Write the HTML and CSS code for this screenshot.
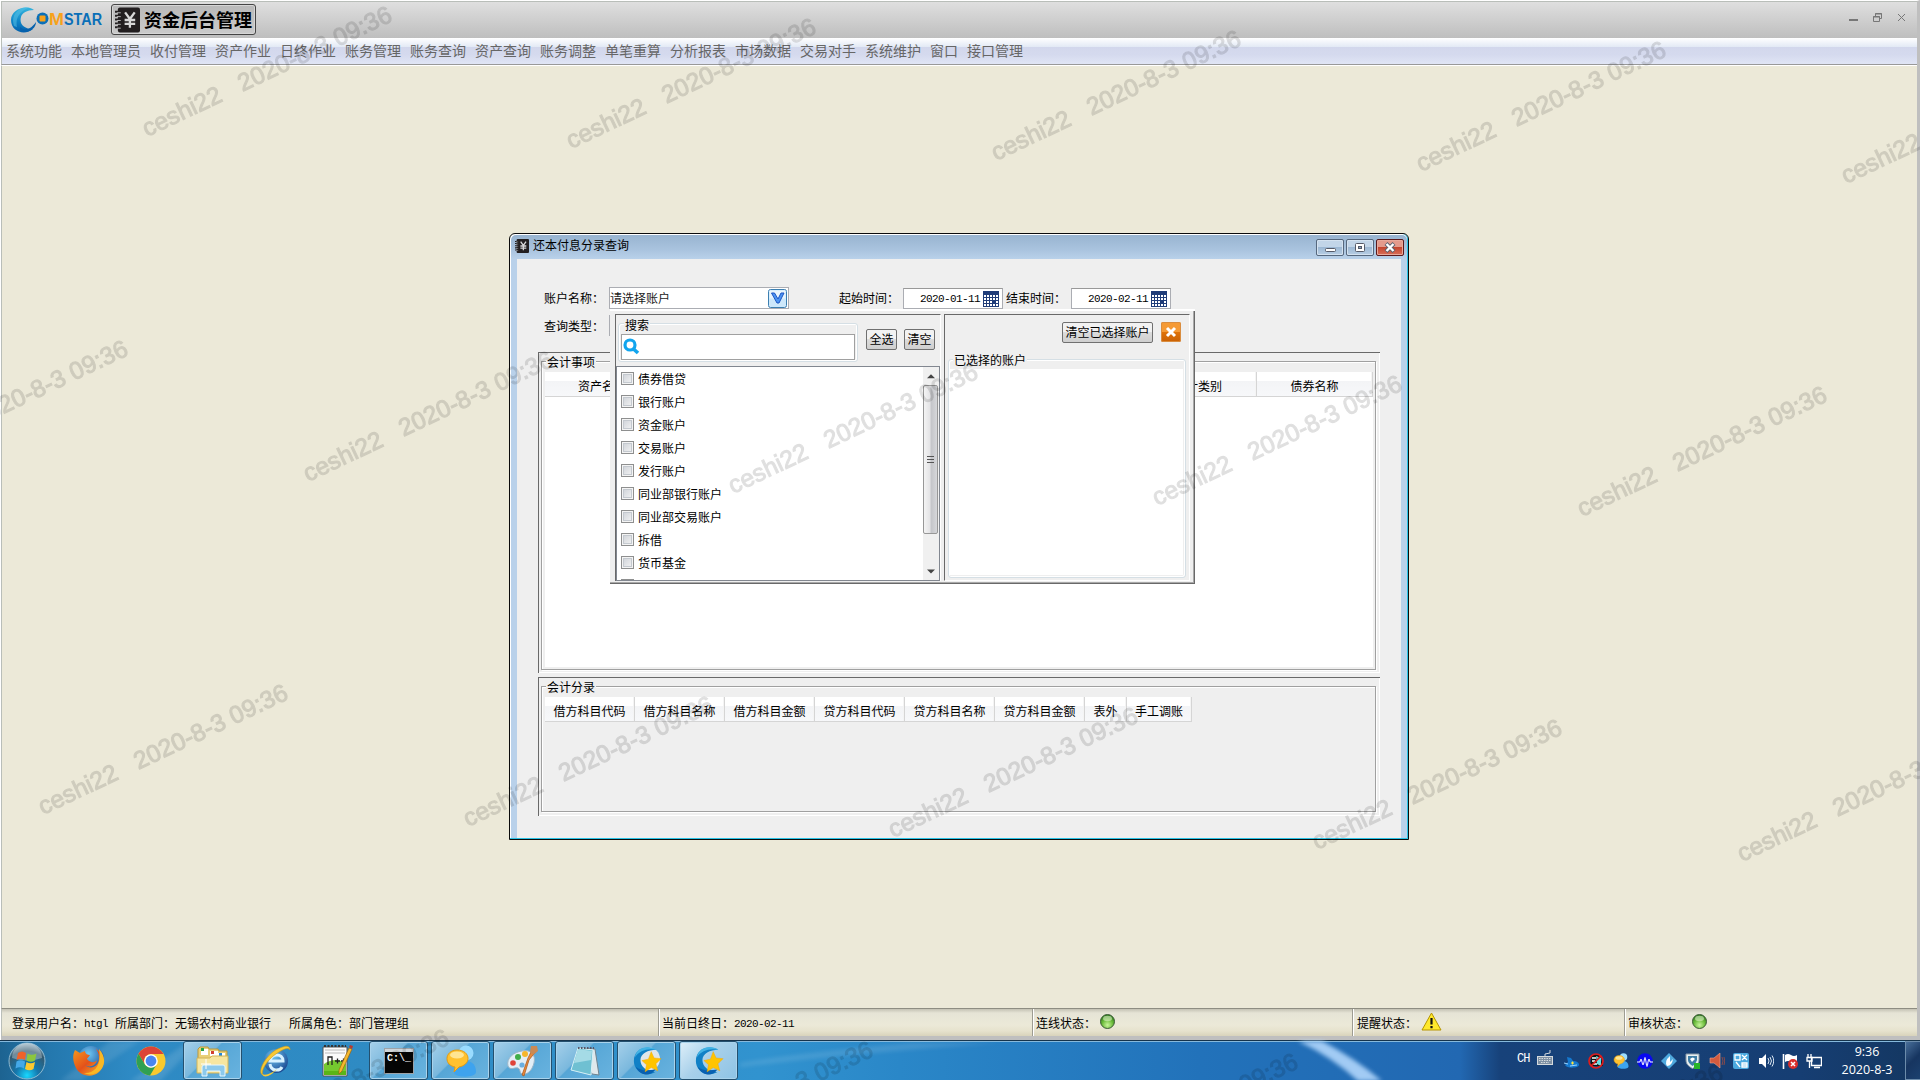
FILE: index.html
```html
<!DOCTYPE html>
<html lang="zh-CN">
<head>
<meta charset="utf-8">
<title>资金后台管理</title>
<link rel="stylesheet" href="styles.css">
</head>
<body>
<svg class="defs" width="0" height="0" aria-hidden="true">
  <defs>
    <linearGradient id="swoosh" x1="0" y1="0" x2="0" y2="1"><stop offset="0" stop-color="#35b4dd"/><stop offset=".55" stop-color="#0f86c8"/><stop offset="1" stop-color="#0560ac"/></linearGradient>
    <radialGradient id="led" cx=".5" cy=".75" r=".7"><stop offset="0" stop-color="#c8f59a"/><stop offset=".55" stop-color="#6cbc3c"/><stop offset="1" stop-color="#2f7a1c"/></radialGradient>
    <radialGradient id="orb" cx=".5" cy=".9" r=".9"><stop offset="0" stop-color="#18d8ff"/><stop offset=".35" stop-color="#1477ad"/><stop offset=".75" stop-color="#34596f"/><stop offset="1" stop-color="#9fb9c8"/></radialGradient>
    <radialGradient id="globe" cx=".4" cy=".3" r=".8"><stop offset="0" stop-color="#6ec8f4"/><stop offset="1" stop-color="#123a86"/></radialGradient>
    <linearGradient id="fox" x1="0" y1="0" x2="1" y2="1"><stop offset="0" stop-color="#f59a1d"/><stop offset=".5" stop-color="#e4511a"/><stop offset="1" stop-color="#f9c22c"/></linearGradient>
    <symbol id="book" viewBox="0 0 26 26">
      <rect x="3" y="0" width="23" height="26" rx="2" fill="#231f20"/>
      <path d="M0 4.500h6M0 8.500h6M0 12.500h6M0 16.500h6M0 20.500h6" stroke="#231f20" stroke-width="2"/>
      <path d="M2 5.500h4M2 9.500h4M2 13.500h4M2 17.500h4M2 21.500h4" stroke="#bbb" stroke-width="1"/>
      <path d="M10.500 5l5 7 5-7M15.500 12v9M10 13h11M10 17h11" stroke="#d8d8d8" stroke-width="2.400" fill="none"/>
    </symbol>
    <symbol id="calendar" viewBox="0 0 16 16">
      <rect width="16" height="16" fill="#1f3c78"/>
      <path d="M1 4h2v2H1zm3 0h2v2H4zm3 0h2v2H7zm3 0h2v2h-2zm3 0h2v2h-2zM1 7h2v2H1zm3 0h2v2H4zm3 0h2v2H7zm3 0h2v2h-2zm3 0h2v2h-2zM1 10h2v2H1zm3 0h2v2H4zm3 0h2v2H7zm6 0h2v2h-2zM1 13h2v2H1zm3 0h2v2H4zm3 0h2v2H7zm3 0h2v2h-2zm3 0h2v2h-2z" fill="#fff"/>
    </symbol>
    <symbol id="chat" viewBox="0 0 32 32">
      <circle cx="21" cy="8" r="7.500" fill="#9adcff"/><path d="M9 28c0-9 5-12 12-12s10 5 10 11-20 6-22 1z" fill="#3ea3ee"/>
      <path d="M12 5c7 0 11 4 11 8.500S19 21 14 22l-5 5 1-5c-5-1-8-4-8-8.500S6 5 12 5z" fill="#ffc12e" stroke="#e29a12"/>
      <ellipse cx="12" cy="10" rx="7" ry="3.500" fill="#ffe593"/>
    </symbol>
    <symbol id="comstar" viewBox="0 0 32 32">
      <path d="M26 4C14-2 2 4 2 16c0 10 10 18 23 12C15 27 9 22 9 15S17 4 26 4z" fill="#1080c6"/>
      <path d="M3 12C5 1 18-2 26 4 16 2 8 5 3 12z" fill="#42b2e4"/><path d="M4 22c6 5 13 4 21 3-6 9-17 6-21-3z" fill="#0860b0"/>
      <path d="M20.500 6l3 6.800 7.500.700-5.500 5.500 2 7.500-7-3.500-6.500 4.500 1.500-7.500-5-4.500 7-1.500z" fill="#ffc400" stroke="#f7a400" stroke-width=".5"/>
    </symbol>
    <symbol id="ledicon" viewBox="0 0 15 15"><circle cx="7.500" cy="7.500" r="7" fill="url(#led)" stroke="#3d5c38"/><ellipse cx="7.500" cy="4.500" rx="4.500" ry="2.800" fill="#e7f6d5" opacity=".55"/></symbol>
  </defs>
</svg>

<div class="app">
  <header class="brandbar">
    <svg class="logo" width="96" height="28" viewBox="0 0 96 28">
      <path d="M23 4C14-2 0 4 0 14c0 12 14 16 22 9C13 23 8 18 10 11c1-4 6-7 13-7z" fill="url(#swoosh)"/>
      <path d="M3 20C-1 9 8 0 19 1 9 5 4 12 6 21z" fill="#55bfe6" opacity=".55"/>
      <path d="M9 21c6 5 12 1 16-5 0 7-9 13-16 8z" fill="#0661ad"/>
      <circle cx="31.500" cy="12.500" r="6" fill="#0a6fb8"/><rect x="28.500" y="9.500" width="6" height="6" rx="1" fill="#f7a11a"/>
      <text x="38" y="18.500" class="logo-m" textLength="15" lengthAdjust="spacingAndGlyphs">M</text>
      <text x="53" y="18.500" class="logo-star" textLength="38" lengthAdjust="spacingAndGlyphs">STAR</text>
    </svg>
    <div class="product"><svg width="25" height="26"><use href="#book"/></svg><span>资金后台管理</span></div>
    <svg class="winctl" width="58" height="12" viewBox="0 0 58 12" fill="none" stroke="#777">
      <path d="M0 8h9" stroke-width="2"/><path d="M26.500 4V1.500h6v5H31M26 2h7" /><path d="M24.500 4.500h6v5h-6zM24 5h7"/><path d="M49 2l7 7M56 2l-7 7"/>
    </svg>
  </header>
  <nav class="menubar">
    <span>系统功能</span><span>本地管理员</span><span>收付管理</span><span>资产作业</span><span>日终作业</span><span>账务管理</span><span>账务查询</span><span>资产查询</span><span>账务调整</span><span>单笔重算</span><span>分析报表</span><span>市场数据</span><span>交易对手</span><span>系统维护</span><span>窗口</span><span>接口管理</span>
  </nav>

  <main class="workspace">
    <section class="window">
      <div class="titlebar">
        <svg width="14" height="14"><use href="#book"/></svg><h1>还本付息分录查询</h1>
        <div class="wbtns">
          <span class="wbtn"><svg width="28" height="17"><rect x="9.500" y="9.500" width="10" height="3" rx="1" fill="#fff" stroke="#555a68"/></svg></span>
          <span class="wbtn"><svg width="28" height="17"><rect x="9.500" y="4.500" width="9" height="8" rx="1" fill="#fff" stroke="#555a68"/><rect x="12.500" y="7.500" width="3" height="2" fill="#8ba6c4" stroke="#555a68"/></svg></span>
          <span class="wbtn close"><svg width="28" height="17"><path d="M10 4.500l8 8M18 4.500l-8 8" stroke="#59616f" stroke-width="4"/><path d="M10.500 5l7 7M17.500 5l-7 7" stroke="#fff" stroke-width="2.400"/></svg></span>
        </div>
      </div>
      <div class="wbody">
        <div class="row">
          <label class="lab first">账户名称：</label>
          <div class="field account"><span>请选择账户</span>
            <svg width="19" height="19"><rect x=".5" y=".5" width="18" height="18" rx="2" fill="#cde8fb" stroke="#3c7fb1"/><rect x="1.500" y="1.500" width="16" height="8" fill="#eaf6fd"/><path d="M3.500 4h3l3.500 6 3-6h3l-5 10h-2z" fill="#4d95f2" stroke="#1c55c4"/></svg>
          </div>
          <label class="lab start">起始时间：</label>
          <div class="field date"><span>2020-01-11</span><svg width="16" height="16"><use href="#calendar"/></svg></div>
          <label class="lab end">结束时间：</label>
          <div class="field date"><span>2020-02-11</span><svg width="16" height="16"><use href="#calendar"/></svg></div>
        </div>
        <div class="row second"><label class="lab first">查询类型：</label><div class="field type"></div></div>

        <div class="panel events"><div class="group"><span class="legend">会计事项</span>
          <div class="table">
            <div class="thead"><span>资产名称</span><span></span><span></span><span></span><span></span><span class="c-type">会计类别</span><span class="c-bond">债券名称</span></div>
          </div></div></div>
        <div class="panel entries"><div class="group"><span class="legend">会计分录</span>
          <div class="thead"><span>借方科目代码</span><span>借方科目名称</span><span>借方科目金额</span><span>贷方科目代码</span><span>贷方科目名称</span><span>贷方科目金额</span><span class="c-off">表外</span><span class="c-man">手工调账</span></div>
        </div></div>

        <div class="popup">
          <div class="pane left">
            <div class="tools">
              <div class="sgroup"><span class="legend">搜索</span>
                <div class="search"><svg width="17" height="17" viewBox="0 0 17 17" fill="none" stroke="#12a5ee"><circle cx="7" cy="7" r="5" stroke-width="3.200"/><path d="M10.500 11l4.500 4" stroke-width="3.600"/></svg></div>
              </div>
              <span class="btn small">全选</span><span class="btn small">清空</span>
            </div>
            <div class="list">
              <ul>
                <li><i></i>债券借贷</li><li><i></i>银行账户</li><li><i></i>资金账户</li><li><i></i>交易账户</li><li><i></i>发行账户</li><li><i></i>同业部银行账户</li><li><i></i>同业部交易账户</li><li><i></i>拆借</li><li><i></i>货币基金</li><li><i></i></li>
              </ul>
              <div class="scroll"><b class="up"></b><div class="thumb"><em></em><em></em><em></em></div><b class="down"></b></div>
            </div>
          </div>
          <div class="pane right">
            <div class="tools2"><span class="btn">清空已选择账户</span><span class="xbtn"><svg width="20" height="20"><path d="M6 6l8 8M14 6l-8 8" stroke="#fff" stroke-width="3"/></svg></span></div>
            <div class="chosen"><span class="legend">已选择的账户</span><div class="blank"></div></div>
          </div>
        </div>
      </div>
    </section>
  </main>

  <footer class="status">
    <div class="cell s1">登录用户名：<span class="mono user">htgl</span>所属部门：无锡农村商业银行<span class="role">所属角色：部门管理组</span></div>
    <div class="cell s2">当前日终日：<span class="mono">2020-02-11</span></div>
    <div class="cell s3">连线状态：<svg width="15" height="15"><use href="#ledicon"/></svg></div>
    <div class="cell s4">提醒状态：<svg width="21" height="19"><path d="M10.500 1L20 18H1z" fill="#ffe92b" stroke="#b59400" stroke-linejoin="round"/><path d="M10.500 6v6.500M10.500 14v2.300" stroke="#111" stroke-width="2.200"/></svg></div>
    <div class="cell s5">审核状态：<svg width="15" height="15"><use href="#ledicon"/></svg></div>
  </footer>
</div>

<div class="taskbar">
  <svg class="ray" width="1920" height="40" viewBox="0 0 1920 40" preserveAspectRatio="none">
    <path d="M60 40L110 0h30L80 40z" fill="#fff" opacity=".1"/><path d="M130 40L190 0h10L160 40z" fill="#fff" opacity=".12"/>
    <path d="M740 26Q850 12 1000 2l-90 0Q800 12 740 22z" fill="#fff" opacity=".12"/>
    <path d="M1298 0h24q34 18 60 40h-24q-26-24-60-40z" fill="#b8dcff" opacity=".85"/>
  </svg>
  <div class="slot orb"><svg width="38" height="38" viewBox="0 0 38 38"><circle cx="19" cy="19" r="18" fill="url(#orb)" stroke="#8fb9d0"/><path d="M4 16a15 15 0 0130 0q-15 5-30 0z" fill="#fff" opacity=".3"/>
    <path d="M10 11q4-3 8 0l-1 7q-4-2.500-8.500 0z" fill="#f0622a"/><path d="M19.500 11.500q4 2.500 9 0l-1.500 7q-4 2.500-8.500 0z" fill="#8cc63e"/><path d="M8.500 19.500q4-2.500 8.500 0l-1 7q-4-2.500-8.500 0z" fill="#45a9e8"/><path d="M18.500 20q4 2.500 8.500 0l-1.500 7q-4 2.500-8.500 0z" fill="#fdc92f"/></svg></div>
  <div class="slot flat"><svg width="32" height="32" viewBox="0 0 32 32"><circle cx="18" cy="14" r="13" fill="url(#globe)"/><path d="M2 5l5 3 5-2c0 3 3 4 5 4-1 2-3 3-3 4 3 4 8 4 10 1-1 6-8 8-12 5 5 5 14 2 14-7 0-4-1-6-3-9 9 6 10 17 3 23-8 7-20 3-23-4C0 17-1 11 2 5z" fill="url(#fox)"/><path d="M26 4c7 7 7 18-1 23-4 3-10 3-14 1 10 1 18-7 15-24z" fill="#f9b824"/></svg></div>
  <div class="slot flat"><svg width="30" height="30" viewBox="0 0 30 30"><circle cx="15" cy="15" r="14.500" fill="#f9c92e"/><path d="M2.500 7.700A14.500 14.500 0 0127.600 8H15a7 7 0 00-6.200 10.200z" fill="#dc4437"/><path d="M2.500 7.700A14.500 14.500 0 0014 29.500l6.500-11a7 7 0 01-11.700-.3z" fill="#2fa052"/><circle cx="15" cy="15" r="6.800" fill="#fff"/><circle cx="15" cy="15" r="5.400" fill="#4a86ef"/></svg></div>
  <div class="slot open"><svg width="34" height="32" viewBox="0 0 34 32"><path d="M2 4l2-2h8l1 2h9l1 2h8v12H2z" fill="#e9cf78" stroke="#b99738"/><path d="M5 4h7v6H5zM14 6h8v5h-8zM22 8h7v5h-7z" fill="#fff"/><path d="M5 3h3v3H5z" fill="#22a447"/><path d="M15 6h3v3h-3z" fill="#d23f31"/><path d="M23 8h3v3h-3z" fill="#2187d8"/><path d="M1 13h13l2-2h16v17H1z" fill="#f7e6a0" stroke="#d2b458"/><path d="M6 31v-9q0-2 2-2h19q2 0 2 2v9h-5v-5H11v5z" fill="#8cc9ec" stroke="#e6f7ff"/><path d="M10 14v10M5 19h10" stroke="#fff"/></svg></div>
  <div class="slot flat"><svg width="34" height="34" viewBox="0 0 34 34"><circle cx="18" cy="17" r="12" fill="url(#globe)"/><path d="M12 17h13c0-8-12-8-13 0zm0 3c1 8 10 7 12 3" fill="none" stroke="#d6f1ff" stroke-width="3"/><path d="M5 31C-2 29 8 9 22 4c7-3 10-2 10 2-2-3-6-1-11 2C10 14 2 27 5 31z" fill="#f8c935" stroke="#d29b12" stroke-width=".6"/><path d="M4 30c4 2 10-1 15-5-6 7-13 10-15 5z" fill="#f8c935"/></svg></div>
  <div class="slot flat"><svg width="32" height="34" viewBox="0 0 32 34"><path d="M2 3h24v29H2z" fill="#fbfbfb" stroke="#555"/><path d="M3 20q12-8 22 0v11H3z" fill="#75c92f"/><path d="M3 27h22v4H3z" fill="#5ab516"/><path d="M4 6h20M4 9h20" stroke="#bbb"/><path d="M3 2h22" stroke="#333" stroke-width="2" stroke-dasharray="2 1.500"/><path d="M7 21v-8h4v8M14 17h5M16.500 14.500v5M20 17h5M22.500 14.500v5" fill="none" stroke="#222" stroke-width="1.300"/><path d="M28 4l3 1-10 22-3 3v-4z" fill="#f5b82e" stroke="#9b6411" stroke-width=".7"/><path d="M28 3l1-2 3 1-1 3z" fill="#b93a2f"/></svg></div>
  <div class="slot open"><svg width="30" height="26" viewBox="0 0 30 26"><rect x=".5" y=".5" width="29" height="25" fill="#050505" stroke="#9da3a8"/><path d="M1 2.500h28" stroke="#cfd5da" stroke-width="3"/><text x="3" y="13" class="cmd">C:\_</text></svg></div>
  <div class="slot open"><svg width="32" height="32"><use href="#chat"/></svg></div>
  <div class="slot open"><svg width="32" height="32" viewBox="0 0 32 32"><path d="M15 6c9-2 14 4 12 12s-7 12-12 11c-3-1-1-5-4-6s-8 3-10-2C-1 13 7 7 15 6z" fill="#e3eef6" stroke="#9ab5c8"/><circle cx="6" cy="18" r="2.800" fill="#df433a"/><circle cx="11" cy="12" r="3" fill="#3fae49"/><circle cx="18" cy="9" r="3" fill="#f6b62b"/><circle cx="15" cy="20" r="2.600" fill="#6aaee0"/><path d="M26 3l4 2-8 10-5 16-2-1 6-17z" fill="#e98a3a" stroke="#a35218" stroke-width=".7"/><path d="M24 1h6l1 5-5 4-3-3z" fill="#c98a55"/></svg></div>
  <div class="slot open"><svg width="32" height="32" viewBox="0 0 32 32"><path d="M9 3l17 1 4 26-7-1z" fill="#dfe8ec" stroke="#71838e"/><path d="M9 3l15 2-2 25L2 25z" fill="#6fc0d2" stroke="#d8f1f7"/><path d="M9 4l14 2-1 9L5 18z" fill="#a5dbe6"/><path d="M9 3h16" stroke="#556" stroke-width="2" stroke-dasharray="1.500 1.500"/></svg></div>
  <div class="slot open"><svg width="30" height="30"><circle cx="16" cy="13" r="12" fill="#dfe6ea"/><use href="#comstar"/></svg></div>
  <div class="slot open active"><svg width="30" height="30"><use href="#comstar"/></svg></div>

  <div class="tray">
    <span class="ime">CH</span>
    <svg class="kbd" width="16" height="16" viewBox="0 0 16 16" fill="none" stroke="#d5dadd"><rect x=".5" y="6.500" width="15" height="8" fill="#7d8fa3"/><path d="M2 8.500h12M2 10.500h12M4 12.500h8" stroke-dasharray="1.500 1"/><path d="M8 6V4l5-1V0"/></svg>
    <svg width="16" height="16" viewBox="0 0 16 16"><path d="M3 4l4 1 2 3c3 0 6 1 6 4s-12 4-14 0l3-3z" fill="#1479d0"/><path d="M0 10l4 1M6 13l7-1" stroke="#9bd5ff"/><path d="M7 10h3M8.500 8.500v3" stroke="#ffe43a" stroke-width="1.200"/></svg>
    <svg width="16" height="16" viewBox="0 0 16 16"><path d="M4 2h8l3 11H2z" fill="#111"/><path d="M8 3l5 2v8l-4-2z" fill="#68dbe1"/><path d="M4 5h4M4 8h3M5 11h4" stroke="#fff" stroke-width="1.500"/><circle cx="8" cy="8" r="7" fill="none" stroke="#de1c1c" stroke-width="1.700"/><path d="M3 13L13 3" stroke="#de1c1c" stroke-width="1.700"/></svg>
    <svg width="16" height="16"><use href="#chat"/></svg>
    <svg width="16" height="16" viewBox="0 0 16 16"><circle cx="8" cy="8" r="7.800" fill="#0808f0"/><path d="M0 9h3q1-6 2 0t2 0q1-9 2 0t2 0q1-6 2 0h3" fill="none" stroke="#fff"/></svg>
    <svg width="16" height="16" viewBox="0 0 16 16"><path d="M8 0l8 8-8 8-8-8z" fill="#4fa9de"/><path d="M9 3q-6 5-3 10 5 0 6-7l-3 3z" fill="#fff"/></svg>
    <svg width="16" height="16" viewBox="0 0 16 16"><path d="M1 1h13v6c0 5-4 7-6.500 8.500C5 14 1 12 1 7z" fill="#e8eff2" stroke="#8698a6"/><path d="M3 3h9v4q-1 4-4.500 6Q3 10 3 7z" fill="#3e7da6"/><path d="M5 6q3-3 5 0L7 9z" fill="#fff"/><path d="M9 10h6v6H9z" fill="#28b428"/></svg>
    <svg width="16" height="16" viewBox="0 0 16 16"><path d="M1 5h4l6-5v15l-6-5H1z" fill="#d45b3e" stroke="#f0a48e" stroke-width=".6"/><path d="M13 4q2 4 0 8M15 4q1.500 4 0 8" stroke="#8a4a4a" fill="none"/></svg>
    <svg width="16" height="16" viewBox="0 0 16 16"><rect width="16" height="16" rx="2" fill="#4ba9df"/><path d="M2 2h5v5H2zM9 2l5 5M14 2L9 7M3 9l4 5M9 10h5v4H9zM9 12h5" fill="none" stroke="#fff" stroke-width="1.300"/></svg>
    <svg width="16" height="16" viewBox="0 0 16 16"><path d="M1 5h3l4-4v14l-4-4H1z" fill="#fff"/><path d="M10 5q2 3 0 6M12 4q3 4 0 8M14 2.500q3.500 5.500 0 11" fill="none" stroke="#dbe7f2"/></svg>
    <svg width="16" height="16" viewBox="0 0 16 16"><path d="M1.500 1v15" stroke="#fff" stroke-width="1.600"/><path d="M3 2q3-2 6 0t6 0v7q-3 2-6 0t-6 0z" fill="#fff"/><circle cx="11" cy="11" r="5" fill="#d92e2b"/><path d="M9 9l4 4M13 9l-4 4" stroke="#fff" stroke-width="1.500"/></svg>
    <svg width="16" height="16" viewBox="0 0 16 16" fill="none" stroke="#fff"><path d="M5.500 4.500h10v8h-10zM8 14.500h6" stroke-width="1.400"/><path d="M2 1v3M5 1v3M1 4.500h5V8H1zM3.500 8v7" stroke-width="1.300"/></svg>
  </div>
  <div class="clock"><span>9:36</span><span>2020-8-3</span></div>
  <div class="peek"></div>
</div>

<svg class="watermark" width="1920" height="1080" viewBox="0 0 1920 1080">
  <defs><text id="wm" transform="rotate(-25.300)" textLength="273" xml:space="preserve">ceshi22   2020-8-3 09:36</text></defs>
  <use href="#wm" x="147" y="137"/><use href="#wm" x="571" y="149"/><use href="#wm" x="996" y="161"/><use href="#wm" x="1421" y="172"/><use href="#wm" x="1846" y="184"/>
  <use href="#wm" x="-117" y="471"/><use href="#wm" x="308" y="482"/><use href="#wm" x="733" y="494"/><use href="#wm" x="1157" y="506"/><use href="#wm" x="1582" y="517"/>
  <use href="#wm" x="43" y="815"/><use href="#wm" x="468" y="827"/><use href="#wm" x="893" y="838"/><use href="#wm" x="1317" y="850"/><use href="#wm" x="1742" y="862"/>
  <use href="#wm" x="204" y="1160"/><use href="#wm" x="628" y="1172"/><use href="#wm" x="1053" y="1184"/><use href="#wm" x="1478" y="1195"/>
</svg>
</body>
</html>
```
FILE: styles.css
```css
* { box-sizing: border-box; }
body { margin: 0; width: 1920px; height: 1080px; overflow: hidden; position: relative; background: #fff; color: #000; font: 12px/14px "Liberation Sans", "Noto Sans CJK SC", sans-serif; }
svg { display: block; flex: none; }
.defs { position: absolute; }
ul, h1 { margin: 0; padding: 0; font: inherit; list-style: none; }

/* application frame */
.app { width: 1920px; height: 1040px; display: flex; flex-direction: column; border-top: 1px solid #fff; border-right: 3px solid #bfbfbf; }
.brandbar { height: 37px; flex: none; display: flex; align-items: center; padding-left: 9px; margin-left: 1px; border-left: 1px solid #b9beb9; border-top: 1px solid #b9beb9; background: linear-gradient(#dfdfdf, #bebebe); }
.logo { margin-top: -1px; }
.logo text { font: bold 16px "Liberation Sans", sans-serif; }
.logo .logo-m { fill: #f7a11a; }
.logo .logo-star { fill: #0a6fb8; }
.product { width: 145px; height: 31px; margin: -1px 0 0 4px; padding-left: 3px; display: flex; align-items: center; gap: 4px; border: 1px solid #444; border-radius: 3px; box-shadow: inset 0 0 0 1px #d6d6d6; background: linear-gradient(#b9b9b9, #cacaca); font: bold 18px/24px "Noto Sans CJK SC", sans-serif; white-space: nowrap; }
.product span { margin-top: -2px; }
.winctl { margin: -4px 10px 0 auto; }
.menubar { height: 27px; flex: none; display: flex; gap: 9px; padding-left: 4px; margin-left: 1px; border-left: 1px solid #b9beb9; border-bottom: 1px solid #999; background: linear-gradient(#fff 0, #e2e9f5 9px, #d2d7ec 9px, #d5daee 17px, #e0e5f5); color: #666; font: 14px/24px "Noto Sans CJK SC", sans-serif; white-space: nowrap; }
.workspace { flex: 1; position: relative; margin-left: 1px; border-left: 1px solid #b9beb9; border-top: 1px solid #fff; background: #ece9d8; }

/* status bar */
.status { height: 32px; flex: none; margin-left: 1px; display: flex; border-top: 1px solid #8e8d82; border-bottom: 4px solid #bfbfbf; border-left: 1px solid #b9beb9; background: linear-gradient(#c4c2b4, #e6e4d6 4px, #ece9d8 16px, #e6e2cd 22px, #d8d3bb); }
.cell { display: flex; align-items: center; padding: 2px 0 0 4px; border-left: 1px solid #9d9c92; box-shadow: inset 1px 0 #fff; white-space: nowrap; }
.s1 { width: 656px; padding-left: 10px; border-left: 0; box-shadow: none; }
.s2 { width: 374px; padding-left: 3px; }
.s3 { width: 320px; padding-left: 3px; }
.s4 { width: 272px; }
.s5 { flex: 1; padding-left: 3px; }
.cell svg { margin: -4px 0 0 4px; }
.mono { font: 11px/14px "Liberation Mono", monospace; letter-spacing: -.6px; }
.user { margin-right: 7px; }
.role { margin-left: 18px; }

/* dialog */
.window { position: absolute; left: 507px; top: 167px; width: 900px; height: 607px; border: 1px solid #0b0b0b; border-radius: 6px 6px 0 0; padding: 1px 1px 1px 1px; background: #fff; box-shadow: inset 0 -1px #29c3e6, inset -1px 0 #29c3e6; }
.titlebar { height: 24px; display: flex; padding: 4px 3px 0 4px; gap: 4px; border-radius: 5px 5px 0 0; background: linear-gradient(#98b4d0, #a9c3de 60%, #b9d1ea); }
.titlebar h1 { line-height: 15px; }
.wbtns { display: flex; gap: 2px; margin-left: auto; }
.wbtn { width: 28px; height: 17px; border: 1px solid #56687e; border-radius: 2px; box-shadow: inset 0 0 0 1px #d4e2f0; background: linear-gradient(#c2d5e8 45%, #9ab6d2 45%, #b7cee4); }
.wbtn svg { margin: -1px; }
.close { border-color: #5b1a1d; box-shadow: inset 0 0 0 1px #e8a99b; background: linear-gradient(#e39a8c 45%, #c2412b 45%, #d8705a); }
.wbody { position: relative; height: 579px; padding: 28px 22px 0 21px; border: solid #b9d1ea; border-width: 0 6px; background: #efefef; }
.row { display: flex; height: 22px; align-items: center; }
.second { height: 21px; margin: 6px 0 16px; }
.lab { flex: none; white-space: nowrap; padding-top: 2px; }
.first { width: 71px; padding-left: 6px; }
.start { width: 64px; margin-left: 50px; }
.end { width: 65px; margin-left: 3px; }
.field { flex: none; height: 22px; display: flex; align-items: center; background: #fff; border: 1px solid #abadb3; }
.account { width: 180px; justify-content: space-between; padding-right: 1px; color: #1a1a1a; }
.account span { padding-top: 1px; }
.date { width: 100px; justify-content: flex-end; gap: 3px; padding: 1px 3px 0 0; border-top-color: #999; height: 21px; margin-top: 1px; font: 11px/14px "Liberation Mono", monospace; letter-spacing: -.6px; }
.type { width: 180px; height: 21px; }

.panel { width: 842px; border: solid #696969; border-width: 1px 0 0 1px; box-shadow: inset -1px -1px #fff; padding: 8px 4px 4px 2px; }
.events { height: 321px; padding-bottom: 3px; }
.entries { height: 139px; margin-top: 4px; }
.group { height: 100%; border: 1px solid #a0a0a0; box-shadow: inset 1px 1px #fff, 1px 1px #fff; padding: 0 2px 2px 3px; }
.legend { display: block; width: fit-content; margin: -6px 0 0 1px; padding: 0 1px; line-height: 14px; background: #efefef; white-space: nowrap; }
.table { height: 295px; margin-top: 2px; background: #fff; }
.thead { display: flex; height: 25px; }
.thead span { width: 90px; flex: none; text-align: center; line-height: 30px; border: solid #d5d5d5; border-width: 0 1px 1px 0; box-shadow: inset -1px 0 #f4f4f4; background: linear-gradient(#fff 9px, #f3f4f6 9px, #f7f8fa); }
.entries .thead { margin-top: 2px; }
.events .thead span { width: 117px; flex: 1; }
.events .thead span:first-child { flex: 0 0 115px; }
.events .thead .c-type { flex: 0 0 117px; }
.events .thead .c-bond { flex: 0 0 116px; }
.thead .c-off { width: 42px; }
.thead .c-man { width: 65px; }

/* account picker */
.popup { position: absolute; left: 93px; top: 50px; width: 585px; height: 275px; display: flex; gap: 3px; padding: 5px 5px 3px; background: #efefef; box-shadow: inset 0 2px #fff, inset -1px -1px #696969, inset -2px -2px #a9a9a9; }
.pane { border: 1px solid #fff; border-top-color: #696969; border-left-color: #696969; }
.left { width: 326px; display: flex; flex-direction: column; border-bottom: 0; }
.right { width: 246px; padding: 7px 3px 3px; }
.tools { height: 51px; flex: none; display: flex; align-items: flex-start; padding: 8px 0 0 2px; }
.sgroup, .chosen { border: 1px solid #d5dfe5; border-radius: 3px; box-shadow: inset 1px 1px #fff, inset -1px -1px #fff; }
.sgroup { flex: none; width: 240px; height: 39px; margin-right: 8px; padding: 0 2px 2px; }
.sgroup .legend { margin-left: 3px; margin-top: -5px; }
.search { height: 26px; margin-top: 1px; padding: 3px 0 0 1px; background: #fff; border: 1px solid #a0a0a0; }
.btn { display: block; flex: none; height: 21px; padding: 0 2px; border: 1px solid #707070; border-radius: 2px; background: linear-gradient(#f2f2f2 50%, #dcdcdc 50%, #cfcfcf); line-height: 21px; text-align: center; white-space: nowrap; }
.small { width: 31px; margin: 6px 7px 0 0; }
.list { flex: 1; min-height: 0; display: flex; justify-content: space-between; border: 1px solid #828790; background: #fff; overflow: hidden; }
.list ul { padding: 0 0 0 4px; }
.list li { height: 23px; display: flex; align-items: center; gap: 3px; line-height: 16px; padding-top: 2px; white-space: nowrap; }
.list i { width: 13px; height: 13px; margin: -2px 1px 0 0; border: 1px solid #8e8f8f; box-shadow: inset 0 0 0 1px #f4f4f4, inset 0 0 0 2px #c4c9cf; background: linear-gradient(135deg, #cbcfd5, #f6f6f6); }
.scroll { width: 16px; height: 213px; display: flex; flex-direction: column; align-items: center; background: #f0f0f0; }
.scroll b { flex: none; height: 18px; width: 8px; background: #444; clip-path: polygon(50% 40%, 100% 62%, 0 62%); }
.scroll .down { margin-top: auto; clip-path: polygon(0 42%, 100% 42%, 50% 64%); }
.thumb { width: 15px; height: 149px; margin: 0 1px 0 0; display: flex; flex-direction: column; justify-content: center; align-items: center; gap: 2px; border: 1px solid #979797; border-radius: 2px; background: linear-gradient(90deg, #f4f4f4, #e4e4e6 45%, #c4c5c9 55%, #d6d7da); }
.thumb em { width: 7px; height: 1px; background: #555; }
.tools2 { display: flex; gap: 8px; justify-content: flex-end; padding-right: 5px; }
.tools2 .btn { width: 91px; }
.xbtn { width: 20px; height: 20px; border-radius: 2px; background: linear-gradient(#f59a35 50%, #df7208 50%, #c96104); box-shadow: inset 0 0 0 1px #d98d40; }
.xbtn svg { width: 20px; }
.chosen { height: 219px; margin-top: 16px; padding: 0 2px 2px 1px; }
.chosen .legend { margin: -6px 0 0 3px; }
.blank { height: 206px; margin-top: 1px; background: #fff; }

/* taskbar */
.taskbar { position: relative; width: 1920px; height: 40px; display: flex; align-items: stretch; border-top: 1px solid #16344c; box-shadow: inset 0 1px #86b9dc; background: linear-gradient(90deg, #1d6391 0, #2478ae 50px, #2e8ac4 130px, #2f8bc3 400px, #3193cf 760px, #2a87c8 900px, #2272ba 1200px, #2268b2 1460px, #17427a 1500px, #163e73 1800px, #143761); }
.ray { position: absolute; left: 0; top: 0; filter: blur(2px); }
.slot { position: relative; width: 59px; margin-right: 3px; display: flex; align-items: center; justify-content: center; flex: none; }
.orb { width: 54px; margin-right: 5px; }
.flat { width: 60px; margin-right: 2px; }
.open { border: 1px solid #24506f; border-radius: 3px; box-shadow: inset 0 0 0 1px #a9d3ec; background: linear-gradient(135deg, #a6d0ea 0, #7ab8dd 40%, #56a6d6 42%, #69b3df); }
.active { background: linear-gradient(135deg, #deeff9, #a8d0ea 45%, #8dc3e5); }
.cmd { font: bold 10px "Liberation Mono", monospace; fill: #fff; }
.tray { position: relative; margin-left: auto; display: flex; align-items: center; gap: 8.200px; }
.ime { color: #fff; font: 12px/14px "Liberation Mono", monospace; letter-spacing: -.8px; margin: -4px -1px 0 0; }
.kbd { margin: -6px 3px 0 0; }
.clock { width: 78px; display: flex; flex-direction: column; align-items: center; padding: 2px 0 0 12px; color: #fff; font: 12.500px/18px "Open Sans", "Noto Sans", sans-serif; }
.peek { width: 15px; margin-left: 5px; border: 1px solid #6c8cab; border-right: 0; background: linear-gradient(135deg, #486e99, #163560 50%, #1c416f); }

.watermark { position: absolute; left: 0; top: 0; pointer-events: none; fill: #000; stroke: #000; stroke-width: 1.100px; opacity: .12; font: 24.500px "Liberation Sans", sans-serif; }
```
